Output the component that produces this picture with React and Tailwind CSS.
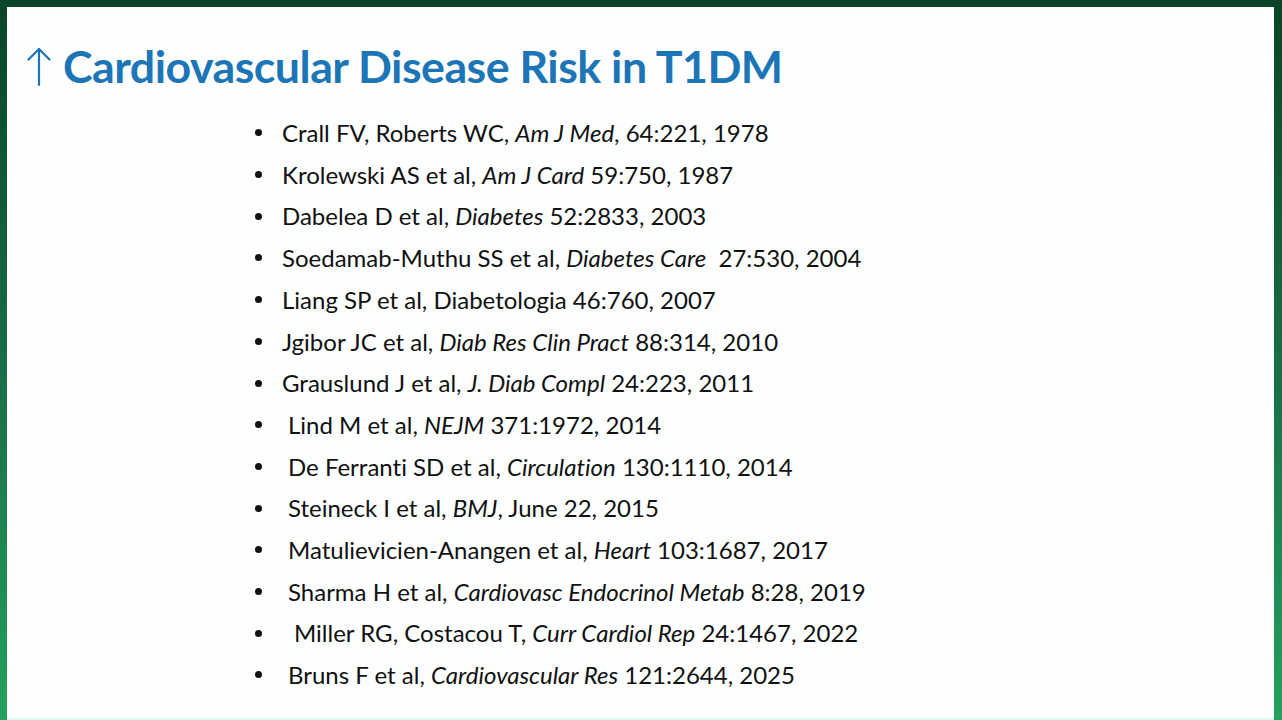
import React from "react";

const refs = [
  { pad: "", parts: ["Crall FV, Roberts WC, ", ["Am J Med"], ", 64:221, 1978"] },
  { pad: "", parts: ["Krolewski AS et al, ", ["Am J Card"], " 59:750, 1987"] },
  { pad: "", parts: ["Dabelea D et al, ", ["Diabetes"], " 52:2833, 2003"] },
  { pad: "", parts: ["Soedamab-Muthu SS et al, ", ["Diabetes Care"], "\u00a0\u00a027:530, 2004"] },
  { pad: "", parts: ["Liang SP et al, Diabetologia 46:760, 2007"] },
  { pad: "", parts: ["Jgibor JC et al, ", ["Diab Res Clin Pract"], " 88:314, 2010"] },
  { pad: "", parts: ["Grauslund J et al, ", ["J. Diab Compl"], " 24:223, 2011"] },
  { pad: "pl-[6px]", parts: ["Lind M et al, ", ["NEJM"], " 371:1972, 2014"] },
  { pad: "pl-[6px]", parts: ["De Ferranti SD et al, ", ["Circulation"], " 130:1110, 2014"] },
  { pad: "pl-[6px]", parts: ["Steineck I et al, ", ["BMJ"], ", June 22, 2015"] },
  { pad: "pl-[6px]", parts: ["Matulievicien-Anangen et al, ", ["Heart"], " 103:1687, 2017"] },
  { pad: "pl-[6px]", parts: ["Sharma H et al, ", ["Cardiovasc Endocrinol Metab"], " 8:28, 2019"] },
  { pad: "pl-[12px]", parts: ["Miller RG, Costacou T, ", ["Curr Cardiol Rep"], " 24:1467, 2022"] },
  { pad: "pl-[6px]", parts: ["Bruns F et al, ", ["Cardiovascular Res"], " 121:2644, 2025"] },
];

export default function App() {
  return (
    <div className="w-[1282px] h-[720px] flex bg-linear-to-b from-[#0a4527] via-[#1a6d45] to-[#24a05f] pt-[7px] pl-[7px] pr-[8px] overflow-hidden">
      <div className="flex-1 flex flex-col bg-[#fdfefe] border-b-2 border-[#dcf7ee]">
        <div className="flex items-end pl-[20px] h-[82px]">
          <svg width="24" height="40" viewBox="0 0 24 40" className="mr-[12px] mb-[2px]" fill="none" stroke="#1c75b6" strokeWidth="2.2" strokeLinecap="round" strokeLinejoin="round">
            <path d="M12 2 V38" />
            <path d="M1.5 12.5 L12 2 L22.5 12.5" />
          </svg>
          <span className="text-[44.7px] leading-none font-bold text-[#1c75b6] tracking-[-0.5px] font-['Lato',sans-serif]">
            Cardiovascular Disease Risk in T1DM
          </span>
        </div>
        <ul className="flex flex-col pl-[246px] pt-[23px] font-['Lato',sans-serif] text-[24px] text-[#111] leading-[41.7px] [font-variant-ligatures:none]">
          {refs.map((r, i) => (
            <li key={i} className="flex items-center">
              <span className="w-[29px] flex items-center">
                <span className="w-[7px] h-[7px] rounded-full bg-[#111] ml-[2px]"></span>
              </span>
              <span className={r.pad}>
                {r.parts.map((p, j) =>
                  Array.isArray(p) ? <i key={j}>{p[0]}</i> : <React.Fragment key={j}>{p}</React.Fragment>
                )}
              </span>
            </li>
          ))}
        </ul>
      </div>
    </div>
  );
}
